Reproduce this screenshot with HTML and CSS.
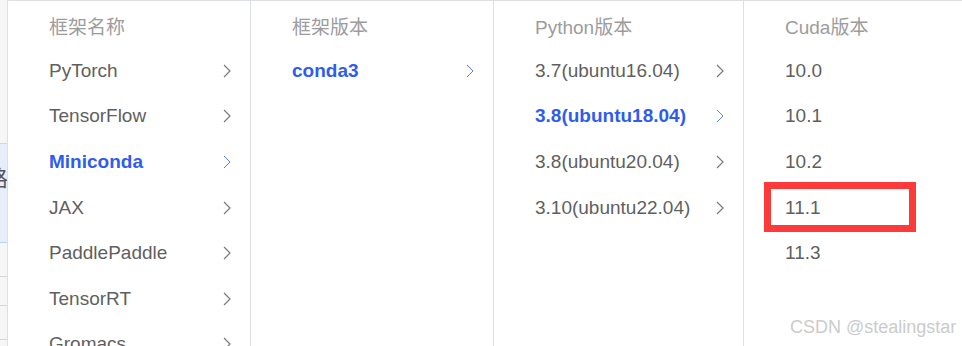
FILE: index.html
```html
<!DOCTYPE html>
<html lang="zh-CN">
<head>
    <meta charset="UTF-8">
    <meta name="viewport" content="width=device-width, initial-scale=1.0">
    <title>镜像选择</title>
    <link rel="stylesheet" href="styles.css">
</head>
<body>
    <div class="page">
        <div class="behind">
            <div class="behind-row selected"><span>路</span></div>
            <div class="behind-row"></div>
            <div class="behind-row short"></div>
            <div class="behind-row"></div>
        </div>
        <div class="cascader">
            <ul class="column">
                <li class="head">框架名称</li>
                <li class="item">PyTorch<svg class="arrow" viewBox="0 0 8 14"><polyline points="1,1 7,7 1,13"/></svg></li>
                <li class="item">TensorFlow<svg class="arrow" viewBox="0 0 8 14"><polyline points="1,1 7,7 1,13"/></svg></li>
                <li class="item active">Miniconda<svg class="arrow" viewBox="0 0 8 14"><polyline points="1,1 7,7 1,13"/></svg></li>
                <li class="item">JAX<svg class="arrow" viewBox="0 0 8 14"><polyline points="1,1 7,7 1,13"/></svg></li>
                <li class="item">PaddlePaddle<svg class="arrow" viewBox="0 0 8 14"><polyline points="1,1 7,7 1,13"/></svg></li>
                <li class="item">TensorRT<svg class="arrow" viewBox="0 0 8 14"><polyline points="1,1 7,7 1,13"/></svg></li>
                <li class="item">Gromacs<svg class="arrow" viewBox="0 0 8 14"><polyline points="1,1 7,7 1,13"/></svg></li>
            </ul>
            <ul class="column">
                <li class="head">框架版本</li>
                <li class="item active">conda3<svg class="arrow" viewBox="0 0 8 14"><polyline points="1,1 7,7 1,13"/></svg></li>
            </ul>
            <ul class="column wide">
                <li class="head">Python版本</li>
                <li class="item">3.7(ubuntu16.04)<svg class="arrow" viewBox="0 0 8 14"><polyline points="1,1 7,7 1,13"/></svg></li>
                <li class="item active">3.8(ubuntu18.04)<svg class="arrow" viewBox="0 0 8 14"><polyline points="1,1 7,7 1,13"/></svg></li>
                <li class="item">3.8(ubuntu20.04)<svg class="arrow" viewBox="0 0 8 14"><polyline points="1,1 7,7 1,13"/></svg></li>
                <li class="item">3.10(ubuntu22.04)<svg class="arrow" viewBox="0 0 8 14"><polyline points="1,1 7,7 1,13"/></svg></li>
            </ul>
            <ul class="column last">
                <li class="head">Cuda版本</li>
                <li class="item">10.0</li>
                <li class="item">10.1</li>
                <li class="item">10.2</li>
                <li class="item">11.1</li>
                <li class="item">11.3</li>
            </ul>
        </div>
        <div class="mark"></div>
        <div class="watermark">CSDN @stealingstar</div>
    </div>
</body>
</html>
```
FILE: styles.css
```css
body {
    margin: 0;
    font-family: "Liberation Sans", Arial, "Noto Sans CJK SC", sans-serif;
    background: #fff;
    overflow: hidden;
}
.page {
    position: relative;
    display: flex;
    width: 962px;
    height: 346px;
    overflow: hidden;
}
.behind {
    width: 7px;
    flex: none;
    background: #f6f6f6;
    padding-top: 143px;
    box-sizing: border-box;
}
.behind-row {
    height: 33px;
    border-bottom: 1px solid #d6d6d6;
    overflow: hidden;
}
.behind-row.selected {
    height: 98px;
    background: #e7eef9;
    border-top: 1px solid #c9d8ef;
    border-bottom: 1px solid #b6d2f6;
    display: flex;
    justify-content: flex-end;
    align-items: center;
}
.behind-row.selected span {
    font-size: 22px;
    color: #555;
    margin-right: -1px;
    margin-top: -34px;
    white-space: nowrap;
}
.behind-row.short {
    height: 28px;
}
.cascader {
    display: flex;
    flex: 1;
    border-left: 1px solid #dcdfe6;
    border-top: 1px solid #dcdfe6;
    background: #fff;
}
.column {
    list-style: none;
    margin: 0;
    padding: 5px 0 0;
    width: 242px;
    flex: none;
    border-right: 1px solid #dcdfe6;
}
.column.wide {
    width: 249px;
}
.column.last {
    flex: 1;
    border-right: none;
}
.column li {
    display: flex;
    align-items: center;
    justify-content: space-between;
    padding: 0 19px 0 41px;
    font-size: 19px;
    white-space: nowrap;
}
.head {
    height: 42px;
    padding-bottom: 4px !important;
    box-sizing: border-box;
    color: #9c9c9c;
}
.item {
    height: 45.6px;
    color: #5f5f5f;
}
.item.active {
    color: #2f5cf0;
    font-weight: bold;
}
.arrow {
    width: 8px;
    height: 14px;
    fill: none;
    stroke: #7a7a7a;
    stroke-width: 1.2;
}
.item.active .arrow {
    stroke: #5b7ff2;
    stroke-width: 1;
}
.mark {
    position: absolute;
    left: 764px;
    top: 182px;
    width: 152px;
    height: 50px;
    border: 7px solid #fd3a3a;
    box-sizing: border-box;
}
.watermark {
    position: absolute;
    left: 790px;
    top: 317px;
    font-size: 18px;
    color: #cbcbcb;
}
```
